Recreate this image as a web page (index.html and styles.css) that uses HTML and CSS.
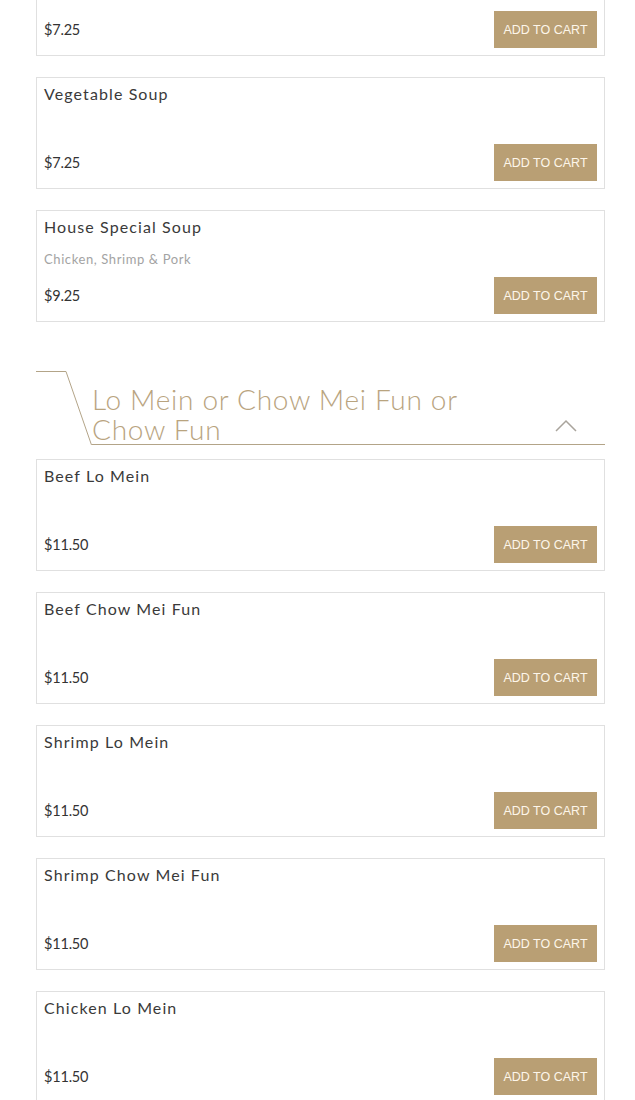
FILE: index.html
```html
<!DOCTYPE html>
<html lang="en">

<head>
    <meta charset="UTF-8">
    <meta name="viewport" content="width=device-width, initial-scale=1.0">
    <title>Menu</title>
    <link rel="stylesheet" href="styles.css">
</head>

<body>
    <div class="menu">
        <!-- soups -->
        <ul class="items first">
            <li class="item">
                <h3 class="name"></h3>
                <p class="desc"></p>
                <div class="buy">
                    <span class="price">$7.25</span>
                    <button>Add to cart</button>
                </div>
            </li>
            <li class="item">
                <h3 class="name">Vegetable Soup</h3>
                <p class="desc"></p>
                <div class="buy">
                    <span class="price">$7.25</span>
                    <button>Add to cart</button>
                </div>
            </li>
            <li class="item">
                <h3 class="name">House Special Soup</h3>
                <p class="desc">Chicken, Shrimp &amp; Pork</p>
                <div class="buy">
                    <span class="price">$9.25</span>
                    <button>Add to cart</button>
                </div>
            </li>
        </ul>

        <div class="cat">
            <svg class="cat-edge" width="56" height="74" viewBox="0 0 56 74">
                <polyline points="0,0.5 30,0.5 55.5,74" fill="none" stroke="#b3a488" stroke-width="1" />
            </svg>
            <div class="cat-bar">
                <h2 class="cat-title">Lo Mein or Chow Mei Fun or Chow Fun</h2>
                <svg class="cat-arrow" width="22" height="14" viewBox="0 0 22 14">
                    <polyline points="1,13 11,3 21,13" fill="none" stroke="#a9a49c" stroke-width="1.5" />
                </svg>
            </div>
        </div>

        <ul class="items">
            <li class="item">
                <h3 class="name">Beef Lo Mein</h3>
                <p class="desc"></p>
                <div class="buy">
                    <span class="price">$11.50</span>
                    <button>Add to cart</button>
                </div>
            </li>
            <li class="item">
                <h3 class="name">Beef Chow Mei Fun</h3>
                <p class="desc"></p>
                <div class="buy">
                    <span class="price">$11.50</span>
                    <button>Add to cart</button>
                </div>
            </li>
            <li class="item">
                <h3 class="name">Shrimp Lo Mein</h3>
                <p class="desc"></p>
                <div class="buy">
                    <span class="price">$11.50</span>
                    <button>Add to cart</button>
                </div>
            </li>
            <li class="item">
                <h3 class="name">Shrimp Chow Mei Fun</h3>
                <p class="desc"></p>
                <div class="buy">
                    <span class="price">$11.50</span>
                    <button>Add to cart</button>
                </div>
            </li>
            <li class="item">
                <h3 class="name">Chicken Lo Mein</h3>
                <p class="desc"></p>
                <div class="buy">
                    <span class="price">$11.50</span>
                    <button>Add to cart</button>
                </div>
            </li>
        </ul>
    </div>
</body>

</html>
```

FILE: styles.css
```css
* {
    margin: 0;
    padding: 0;
    list-style: none;
    box-sizing: border-box;
}
body {
    background: #fff;
    font-family: Lato, "Open Sans", sans-serif;
    color: #333;
}
.menu {
    width: 569px;
    margin: 0 auto 0 36px;
}
.items {
    display: flex;
    flex-direction: column;
    gap: 21px;
}
/* page is scrolled: the first card is cut at the top */
.items.first {
    margin-top: -56px;
}
.item {
    height: 112px;
    border: 1px solid #e0e0e0;
    padding: 6px 7px 7px 7px;
    display: flex;
    flex-direction: column;
}
.item .name {
    height: 20px;
    font-size: 16px;
    font-weight: 400;
    letter-spacing: 1.1px;
    line-height: 20px;
    color: #3a3a3a;
}
.item .desc {
    margin-top: 12px;
    height: 20px;
    font-size: 13px;
    line-height: 20px;
    letter-spacing: 0.6px;
    color: #a3a3a3;
}
.buy {
    margin-top: auto;
    display: flex;
    align-items: center;
    justify-content: space-between;
}
.price {
    font-size: 14.5px;
    letter-spacing: -0.2px;
    color: #333;
}
.buy button {
    width: 103px;
    height: 37px;
    border: none;
    background: #b99f74;
    color: #fdf6ea;
    font-family: "Liberation Sans", Arial, sans-serif;
    font-size: 12.5px;
    text-transform: uppercase;
    cursor: pointer;
}

/* category heading */
.cat {
    display: flex;
    margin: 49px 0 14px;
}
.cat-edge {
    flex: none;
    display: block;
}
.cat-bar {
    flex: 1;
    display: flex;
    justify-content: space-between;
    border-bottom: 1px solid #b3a488;
}
.cat-title {
    width: 400px;
    padding-top: 13px;
    font-size: 28px;
    font-weight: 300;
    line-height: 30px;
    letter-spacing: 0.7px;
    color: #b9a47f;
}
.cat-arrow {
    align-self: flex-end;
    margin: 0 28px 12px 0;
}
```
